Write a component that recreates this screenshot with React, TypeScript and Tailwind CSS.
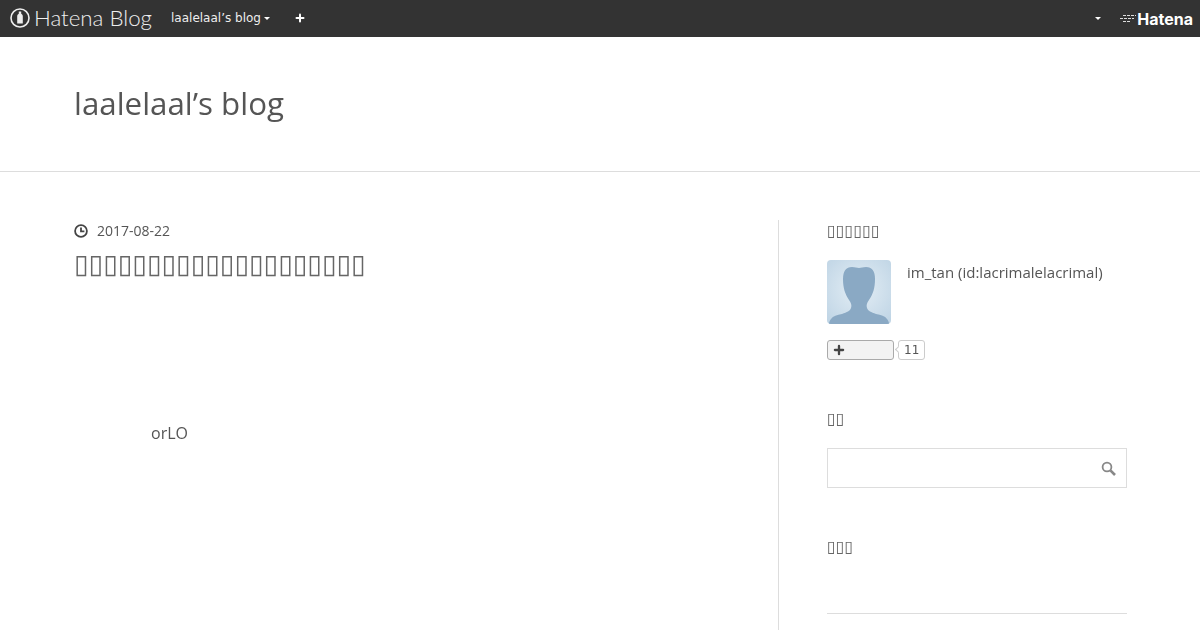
import React from 'react';
import { Plus } from 'lucide-react';

// the reference has no CJK font, so its Japanese shows as missing-glyph boxes
const tofu = (n: number) => '\u25AF'.repeat(n);

function ClockIcon() {
  return (
    <svg width="14" height="14" viewBox="0 0 14 14" fill="none" stroke="#444" strokeWidth="1.8">
      <circle cx="7" cy="7" r="5.9" />
      <path d="M7 3.4V7.4H10.4" />
    </svg>
  );
}

function SearchIcon() {
  return (
    <svg width="15" height="15" viewBox="0 0 15 15" fill="none" stroke="#888888">
      <circle cx="6" cy="6" r="4.4" strokeWidth="1.8" />
      <path d="M9.4 9.4L14 14" strokeWidth="2.6" />
    </svg>
  );
}

function LogoMark() {
  return (
    <svg width="20" height="20" viewBox="0 0 20 20" fill="none">
      <circle cx="10" cy="10" r="9" stroke="#eeeeee" strokeWidth="1.6" />
      <path d="M8.8 3.5h2.4v2.2c1 .6 1.6 1.4 1.6 2.6v7.2H7.2V8.3c0-1.2.6-2 1.6-2.6z" fill="#eeeeee" />
    </svg>
  );
}

function Avatar() {
  return (
    <div className="w-16 h-16 rounded-[4px] overflow-hidden bg-[radial-gradient(circle_at_50%_45%,#e4eef5,#bdd3e4)]">
      <svg width="64" height="64" viewBox="0 0 64 64" fill="#8aa9c4">
        <path d="M25 7c-6 0-9 4-9 12 0 9 2 15 6 21 2 3 3 5 2 8-1 3-4 4-9 6-5 1-9 2-11 5-1 1-2 3-2 5h60c0-2-1-4-2-5-2-3-6-4-11-5-5-2-8-3-9-6-1-3 0-5 2-8 4-6 6-12 6-21 0-8-3-12-9-12-3 0-5 1-7 1s-4-1-7-1z" />
      </svg>
    </div>
  );
}

export default function App() {
  return (
    <div className="w-[1200px] h-[630px] overflow-hidden bg-white font-['Open_Sans',sans-serif] text-[#555555]">
      {/* --- NAVBAR --- */}
      <div className="h-[37px] bg-[#333333] flex items-center justify-between text-white">
        <div className="flex items-center">
          <div className="ml-[10px] flex"><LogoMark /></div>
          <span className="ml-[4px] w-[118px] whitespace-nowrap font-['Lato',sans-serif] font-light text-[22.3px] leading-none text-[#eeeeee]">Hatena Blog</span>
          <span className="ml-[19px] font-['DejaVu_Sans',sans-serif] text-[12px] text-[#eeeeee]">laalelaal’s blog</span>
          <span className="ml-[3px] mt-[1px] w-0 h-0 border-x-[3px] border-x-transparent border-t-[3px] border-t-white" />
          <Plus className="ml-[24px]" size={12} strokeWidth={4} color="#ffffff" />
        </div>
        <div className="flex items-center">
          <span className="mr-[2px] w-0 h-0 border-x-[3px] border-x-transparent border-t-[3px] border-t-white" />
          <svg className="ml-[16px]" width="18" height="12" viewBox="0 0 18 12" stroke="#dddddd" strokeWidth="1" fill="none" strokeDasharray="3 1">
            <path d="M4 2.5H17M1 5.5H15M4 8.5H11" />
          </svg>
          <span className="mr-[7px] font-['Inter',sans-serif] font-bold text-[16px] leading-none">Hatena</span>
        </div>
      </div>

      {/* --- BLOG TITLE --- */}
      <div className="h-[135px] border-b border-[#dddddd] pl-[75px] pt-[42px]">
        <h1 className="text-[31.3px] leading-[48px] -ml-px will-change-transform">laalelaal’s blog</h1>
      </div>

      {/* --- CONTENT --- */}
      <div className="flex pt-[48px] pl-[75px]">
        <div className="w-[704px] h-[420px] border-r border-[#dddddd]">
          <div className="flex items-center gap-[9px] text-[14px] leading-[22px] -ml-px will-change-transform">
            <ClockIcon />
            <span>2017-08-22</span>
          </div>
          <h2 className="mt-[4px] -ml-px font-['DejaVu_Sans',sans-serif] text-[26.5px] leading-[36px] text-[#666666] will-change-transform">{tofu(20)}</h2>
          <p className="mt-[139px] ml-[76px] text-[16px] leading-[24px] will-change-transform">orLO</p>
        </div>

        <div className="ml-[48px] w-[300px]">
          <div className="font-['DejaVu_Sans',sans-serif] text-[16px] leading-[22px] text-[#666666] will-change-transform">{tofu(6)}</div>
          <div className="mt-[18px] flex">
            <Avatar />
            <span className="ml-[16px] text-[15px] leading-[24px] will-change-transform">im_tan (id:lacrimalelacrimal)</span>
          </div>
          <div className="mt-[16px] flex items-center">
            <div className="w-[67px] h-[20px] rounded-[3px] border border-[#aaaaaa] bg-[#f3f3f3] flex items-center pl-[4px]">
              <Plus size={14} strokeWidth={4} color="#444444" />
            </div>
            <div className="relative ml-[4px] h-[20px] px-[5px] rounded-[3px] border border-[#cccccc] bg-white font-['DejaVu_Sans',sans-serif] text-[12px] leading-[18px]">
              <span className="absolute left-[-3px] top-[6px] w-[5px] h-[5px] rotate-45 border-l border-b border-[#cccccc] bg-white" />
              <span className="block will-change-transform">11</span>
            </div>
          </div>

          <div className="mt-[48px] font-['DejaVu_Sans',sans-serif] text-[16px] leading-[22px] text-[#666666] will-change-transform">{tofu(2)}</div>
          <div className="mt-[18px] h-[40px] border border-[#dddddd] flex items-center justify-end pr-[10px]">
            <SearchIcon />
          </div>

          <div className="mt-[48px] font-['DejaVu_Sans',sans-serif] text-[16px] leading-[22px] text-[#666666] will-change-transform">{tofu(3)}</div>
          <div className="mt-[55px] border-t border-[#dddddd]" />
        </div>
      </div>
    </div>
  );
}
